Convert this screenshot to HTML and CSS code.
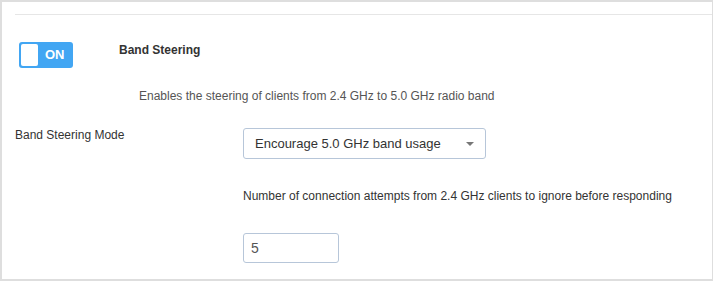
FILE: index.html
```html
<!DOCTYPE html>
<html>
<head>
<meta charset="utf-8">
<link rel="stylesheet" href="styles.css">
</head>
<body>
<div class="panel">
  <div class="rule"></div>
  <div class="toggle-row">
    <div class="toggle"><span class="knob"></span><span class="toggle-label">ON</span></div>
    <div class="heading">Band Steering</div>
  </div>
  <div class="desc">Enables the steering of clients from 2.4 GHz to 5.0 GHz radio band</div>
  <div class="form-grid">
    <div class="label">Band Steering Mode</div>
    <div class="field">
      <div class="select"><span>Encourage 5.0 GHz band usage</span><span class="caret"></span></div>
      <div class="help">Number of connection attempts from 2.4 GHz clients to ignore before responding</div>
      <div class="input">5</div>
    </div>
  </div>
</div>
</body>
</html>
```
FILE: styles.css
```css
html, body { margin: 0; padding: 0; background: #fff; }
body { font-family: "Liberation Sans", Arial, sans-serif; color: #333; }
.panel {
  box-sizing: border-box;
  width: 713px;
  height: 281px;
  border: 2px solid #dedede;
  border-right-width: 1px;
  padding: 12px 0 0 13px;
  overflow: hidden;
}
.rule { height: 1px; background: #e6e6e6; }
.toggle-row { display: flex; align-items: flex-start; margin-top: 27px; padding-left: 4px; }
.toggle {
  box-sizing: border-box;
  width: 54px; height: 26px;
  background: #42a6f3;
  border-radius: 3px;
  padding: 2px;
  display: flex; align-items: stretch;
}
.knob { width: 17px; background: #fff; border-radius: 2px; }
.toggle-label { color: #fff; font-weight: bold; font-size: 13px; line-height: 22px; margin-left: 7px; }
.heading { font-weight: bold; font-size: 12px; margin-left: 46px; line-height: 16px; }
.desc { font-size: 12px; color: #555; margin: 20px 0 0 124px; line-height: 16px; }
.form-grid { display: grid; grid-template-columns: 228px 1fr; margin-top: 24px; }
.label { font-size: 12px; line-height: 14px; padding-top: 0; }
.select {
  box-sizing: border-box;
  width: 243px; height: 31px;
  border: 1px solid #b7c6d9;
  border-radius: 3px;
  display: flex; align-items: center; justify-content: space-between;
  padding: 0 11px 0 11px;
  font-size: 13px; color: #333;
}
.caret { width: 0; height: 0; border-left: 4px solid transparent; border-right: 4px solid transparent; border-top: 4px solid #777; }
.help { font-size: 12px; line-height: 16px; margin-top: 29px; }
.input {
  box-sizing: border-box;
  width: 96px; height: 30px;
  border: 1px solid #b7c6d9;
  border-radius: 3px;
  margin-top: 29px;
  padding-left: 7px;
  font-size: 14px; line-height: 28px; color: #555;
}
```
